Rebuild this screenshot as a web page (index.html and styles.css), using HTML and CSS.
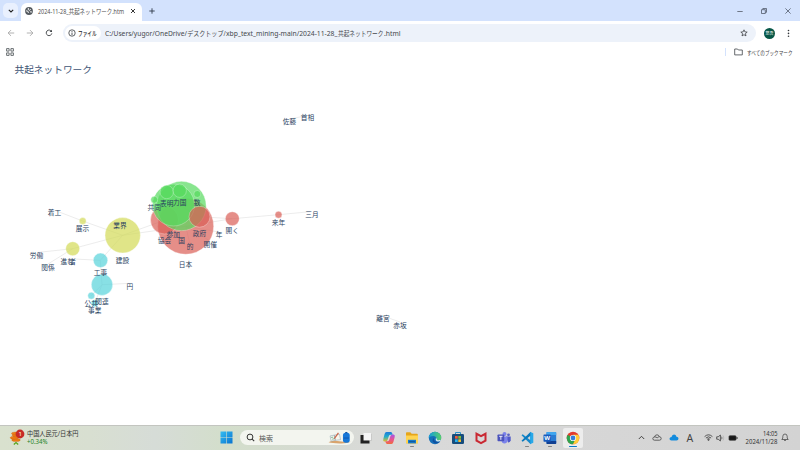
FILE: index.html
```html
<!DOCTYPE html>
<html lang="ja">
<head>
<meta charset="utf-8">
<title>2024-11-28_共起ネットワーク.html</title>
<link rel="stylesheet" href="styles.css">
</head>
<body>
<div class="screen">
  <header class="tabstrip">
    <div class="tab-search"><svg width="6" height="4" viewBox="0 0 6 4"><path d="M.8.8 3 3 5.2.8" fill="none" stroke="#222" stroke-width="1.1"/></svg></div>
    <div class="tab">
      <svg class="globe" width="8" height="8" viewBox="0 0 8 8"><circle cx="4" cy="4" r="3.9" fill="#565b60"/><path d="M1 3.800 3 4.300 3.400 6M3.500 1 3.100 2.400 4.600 3.300 5.800 2.300M5 4.800 7 5" fill="none" stroke="#fff" stroke-width=".9"/></svg>
      <span class="tab-title"><svg width="90" height="12"><text x="0" y="8.7" textLength="86" lengthAdjust="spacingAndGlyphs">2024-11-28_共起ネットワーク.htm</text></svg></span>
      <svg width="6" height="6" viewBox="0 0 6 6"><path d="m1 1 4 4m0-4L1 5" stroke="#222" stroke-width=".9"/></svg>
    </div>
    <svg class="new-tab" width="6" height="6" viewBox="0 0 6 6"><path d="M3 .3v5.4M.3 3h5.4" stroke="#303a4a" stroke-width=".9"/></svg>
    <div class="window-controls">
      <svg width="6" height="6" viewBox="0 0 6 6"><path d="M.3 3.500h5.4" stroke="#555c68" stroke-width=".8"/></svg>
      <svg width="6" height="6" viewBox="0 0 6 6"><path d="M.5 1.700h3.800v3.800H.5zM1.800 1.500V.5h3.700v3.800H4.400" fill="none" stroke="#414958" stroke-width=".7"/></svg>
      <svg width="6" height="6" viewBox="0 0 6 6"><path d="m.4.4 5.200 5.200m0-5.200L.4 5.600" stroke="#414958" stroke-width=".7"/></svg>
    </div>
  </header>
  <div class="toolbar">
    <div class="nav">
      <svg width="8" height="8" viewBox="0 0 8 8"><path d="M7.200 4H1.200M4 1.100 1.100 4 4 6.900" fill="none" stroke="#a0a0a0" stroke-width=".8"/></svg>
      <svg width="8" height="8" viewBox="0 0 8 8"><path d="M.8 4h6M4 1.100 6.900 4 4 6.900" fill="none" stroke="#a0a0a0" stroke-width=".8"/></svg>
      <svg width="8" height="8" viewBox="0 0 8 8"><path d="M6.500 2.500A2.800 2.800 0 1 0 6.800 4.400" fill="none" stroke="#3c4043" stroke-width=".9"/><path d="M4.500 3.100H7V.8z" fill="#3c4043"/></svg>
    </div>
    <div class="omnibox">
      <div class="chip">
        <svg width="8" height="8" viewBox="0 0 8 8"><circle cx="4" cy="4" r="3.200" fill="none" stroke="#2e3134" stroke-width=".75"/><path d="M4 3.500V6M4 2v.9" stroke="#2e3134" stroke-width=".8"/></svg>
        <svg width="20" height="12"><text x="0" y="8.600" textLength="18.500" lengthAdjust="spacingAndGlyphs" class="chip-text">ファイル</text></svg>
      </div>
      <svg class="url" width="300" height="16"><text x="0" y="10.700" textLength="82" lengthAdjust="spacingAndGlyphs">C:/Users/yugor/OneDrive/</text><text x="82.200" y="10.700" textLength="38.500" lengthAdjust="spacingAndGlyphs">デスクトップ/</text><text x="121" y="10.700" textLength="111.500" lengthAdjust="spacingAndGlyphs">xbp_text_mining-main/2024-11-28_</text><text x="233" y="10.700" textLength="45.500" lengthAdjust="spacingAndGlyphs">共起ネットワーク</text><text x="279" y="10.700" textLength="16.500" lengthAdjust="spacingAndGlyphs">.html</text></svg>
      <svg class="star" width="8" height="8" viewBox="0 0 8 8"><path d="m4 .8.900 2.100 2.300.2-1.800 1.500.6 2.300-2-1.200-2 1.200.6-2.300L.8 3.100l2.300-.2z" fill="none" stroke="#35383c" stroke-width=".75"/></svg>
    </div>
    <div class="avatar">悠吾</div>
    <svg class="menu" width="3" height="9" viewBox="0 0 3 9"><circle cx="1.500" cy="1.500" r=".8"/><circle cx="1.500" cy="4.400" r=".8"/><circle cx="1.500" cy="7.300" r=".8"/></svg>
  </div>
  <div class="bookmarks">
    <svg width="8" height="8" viewBox="0 0 8 8"><path d="M.6.6h2.500v2.500H.6zM4.900.6h2.500v2.500H4.900zM.6 4.900h2.500v2.500H.6zM4.900 4.900h2.500v2.500H4.900z" fill="none" stroke="#52575c" stroke-width=".85"/></svg>
    <span class="divider"></span>
    <svg width="9" height="8" viewBox="0 0 9 8"><path d="M.7 1h2.800l.9 1h3.900v4.900H.7z" fill="none" stroke="#4a4f54" stroke-width=".85"/></svg>
    <svg class="all-marks" width="46" height="12"><text x="0" y="8.600" textLength="45.500" lengthAdjust="spacingAndGlyphs">すべてのブックマーク</text></svg>
  </div>
  <main>
    <svg class="network" width="800" height="366" viewBox="0 59 800 366">
      <text class="heading" x="14.500" y="73.400" textLength="77.500" lengthAdjust="spacingAndGlyphs">共起ネットワーク</text>
      <g class="edges">
        <path d="M289 119 308 115.500M383 316l17 6M312 211.500 278.500 214.700 232.300 218.700 199.300 216.700M232.300 218.700 185.700 226.300M54 210 82.700 221 122.700 235.300 72.700 248.700 37 252.500M72.700 248.700 48 264M68 258.700 100.300 260.300 122.700 235.300 165 220M122.700 235.300 185.700 226.300M100.300 260.300 102 284.700 130 283.300M102 284.700 91.300 295.700M102 284.700 94.700 303.300M185.700 226.300 219 232M185.700 226.300 190 244M185.700 226.300 210 241M165 220 173 232M165 220 165 238M181 206 199.300 216.700M181 206 154.300 199.700"/>
      </g>
      <g class="nodes">
        <g fill="#db5f57"><circle cx="185.700" cy="226.300" r="28"/><circle cx="164.500" cy="220" r="14"/><circle cx="232.300" cy="218.700" r="7"/><circle cx="278.500" cy="214.700" r="3.500"/></g>
        <g fill="#57db5f"><circle cx="181.500" cy="206" r="24.700"/><circle cx="173.500" cy="205" r="21"/><circle cx="166.700" cy="192" r="6.700"/><circle cx="179.700" cy="190.700" r="6.700"/><circle cx="197.300" cy="194" r="3.500"/><circle cx="154.300" cy="199.700" r="3.500"/></g>
        <circle cx="199.500" cy="216.700" r="10.500" fill="#db5f57"/>
        <g fill="#d3db57"><circle cx="122.700" cy="235.300" r="17.700"/><circle cx="72.700" cy="248.700" r="7"/><circle cx="82.700" cy="221" r="3.500"/></g>
        <g fill="#57d3db"><circle cx="100.500" cy="260.300" r="7.200"/><circle cx="102" cy="284.700" r="10.700"/><circle cx="91.300" cy="295.700" r="3.500"/><circle cx="94.700" cy="303.300" r="3.500"/></g>
      </g>
      <g class="labels">
        <text x="289.500" y="124">佐藤</text><text x="307.500" y="120.200">首相</text><text x="312" y="216.500">三月</text><text x="278.500" y="224.700">来年</text><text x="232.200" y="233.300">開く</text><text x="219" y="237">年</text><text x="210.300" y="246.500">開催</text><text x="199.500" y="235.700">政府</text><text x="190" y="249">的</text><text x="181.500" y="243">国</text><text x="173.300" y="237.300">参加</text><text x="164.500" y="243.300">協会</text><text x="185.500" y="267">日本</text><text x="154.300" y="210">共同</text><text x="166.700" y="206">表明</text><text x="179.700" y="205.200">力国</text><text x="197" y="204.700">数</text>
        <text x="54.500" y="214.500">着工</text><text x="82.500" y="231">展示</text><text x="120" y="228.300">業界</text><text x="122.500" y="263">建設</text><text x="36.500" y="258.300">労働</text><text x="48" y="269.500">関係</text><text x="67.300" y="263.500">進む</text><text x="72.500" y="263.500">者</text><text x="100.500" y="275">工事</text><text x="129.800" y="288.500">円</text><text x="91.300" y="306">公共</text><text x="102" y="303.700">関連</text><text x="94.700" y="313">事業</text><text x="383" y="321">離宮</text><text x="400" y="328">赤坂</text>
      </g>
    </svg>
  </main>
  <footer class="taskbar">
    <div class="widget">
      <svg width="18" height="20" viewBox="0 0 18 20"><g fill="#ed7b16" stroke="#b85808" stroke-width=".3"><ellipse cx="7" cy="12" rx="4.300" ry="1.500"/><ellipse cx="5.500" cy="9.700" rx="4.300" ry="1.500"/><ellipse cx="7.500" cy="7.500" rx="4.300" ry="1.500"/><ellipse cx="6.500" cy="5.500" rx="4" ry="1.500"/></g><path d="m4.800 16.500 2.200-2 2.200 2" fill="none" stroke="#55a51c" stroke-width="1.200"/><circle cx="11" cy="6" r="4.400" fill="#c72b26"/><text x="9.400" y="8.200" font-size="6" fill="#fff">1</text></svg>
      <div class="widget-text"><svg width="56" height="9"><text x="0" y="6.800" textLength="51.500" lengthAdjust="spacingAndGlyphs">中国人民元/日本円</text></svg><svg width="56" height="8"><text class="rise" x="0" y="6.300" textLength="20.500" lengthAdjust="spacingAndGlyphs">+0.34%</text></svg></div>
    </div>
    <svg class="start" width="13" height="13" viewBox="0 0 13 13"><defs><linearGradient id="win" x1="0" y1="0" x2="1" y2="1"><stop stop-color="#35bdf2"/><stop offset="1" stop-color="#0873d0"/></linearGradient></defs><path d="M.5.500h5.700v5.700H.500zM6.800.500h5.700v5.700H6.800zM.500 6.800h5.700v5.700H.500zM6.800 6.800h5.700v5.700H6.800z" fill="url(#win)"/></svg>
    <div class="search">
      <svg width="9" height="9" viewBox="0 0 9 9"><circle cx="4" cy="4" r="2.900" fill="none" stroke="#333" stroke-width="1"/><path d="m6.200 6.200 2 2" stroke="#333" stroke-width="1.100"/></svg>
      <span>検索</span>
      <svg class="search-art" width="23" height="13" viewBox="0 0 22 12"><path d="M.500 10.500Q4 8.300 11 9.500T22 10Q18 12 11 11.700T.500 10.500" fill="#d9a46d"/><path d="m2 4.500 4-.8 1 5-4 .8zM6 3.700l5-.8 1 5.200-5 .6z" fill="#f8f7ed" stroke="#8a9eac" stroke-width=".5"/><path d="m6 7 4-5.500" stroke="#cb6749" stroke-width="1.200"/><path d="m3 6 2-.4m-1 2 2-.4" stroke="#52a57f" stroke-width=".7"/><rect x="14.300" y="1.500" width="6.500" height="9.500" rx="2.500" fill="#1677d8"/><path d="M16.500 1.300h2" fill="none" stroke="#1355a0" stroke-width="1.200"/><path d="M15 6.500h5" stroke="#1053a6" stroke-width=".8"/></svg>
    </div>
    <div class="apps">
      <div class="app"><svg viewBox="0 0 14 14"><path d="M4.500 2h8v7.500h-8z" fill="#f5f5f5"/><path d="M1.500 4h3v5.500h6v3h-9z" fill="#222"/><path d="M10.500 9.500h2V2.500" fill="none" stroke="#aaa" stroke-width=".5"/></svg></div>
      <div class="app"><svg viewBox="0 0 14 14"><defs><linearGradient id="cpa" x1="0" y1="0" x2="0" y2="1"><stop stop-color="#1c78dc"/><stop offset=".5" stop-color="#23adc9"/><stop offset="1" stop-color="#e5bc27"/></linearGradient><linearGradient id="cpb" x1="0" y1="0" x2="0" y2="1"><stop stop-color="#a456e7"/><stop offset=".5" stop-color="#e65296"/><stop offset="1" stop-color="#f26c3c"/></linearGradient></defs><path d="M4.500 1h4.400q1 0 1.500 1.800l.3 1H8.500Q7 3.800 6.500 6L5.600 9q-.6 1.500-2 1.500H2.400Q.7 10.500 1.300 8l1.300-5Q3.100 1 4.500 1" fill="url(#cpa)"/><path d="M9.500 13H5.100q-1 0-1.500-1.800l-.3-1h2.200Q7 10.200 7.500 8l.9-3q.6-1.500 2-1.500h1.200q1.700 0 1.100 2.500l-1.300 5q-.5 2-1.900 2" fill="url(#cpb)"/></svg></div>
      <div class="app running"><svg viewBox="0 0 14 14"><path d="M1 2q0-.800.8-.800h3.500l1.400 1.500H12q.8 0 .8.800v8.700H1z" fill="#e6a51b"/><path d="M1 4.500h12v7q0 .9-.9.900H2q-1 0-1-.9z" fill="#ffd451"/><path d="M3 8.800h8v3.600H3z" fill="#1979c9"/><path d="M4 10.600h6" stroke="#0d599e"/></svg></div>
      <div class="app"><svg viewBox="0 0 14 14"><defs><linearGradient id="edg" x1="0" y1="0" x2="1" y2="0"><stop stop-color="#159ddb"/><stop offset="1" stop-color="#59cf67"/></linearGradient></defs><circle cx="7" cy="7" r="6.200" fill="#156fb9"/><path d="M.8 7A6.200 6.200 0 0 1 13.200 7q0 2.800-3.200 2.700-2 0-1.500-1.700Q8.300 5 5.200 5 2 5 .8 7" fill="url(#edg)"/><path d="M7 5.500q-2 1.300-1 3.500 1.500 2.700 5.800 1.800Q9 13 6.300 12 2.500 9.500 7 5.500" fill="#104f9e"/><path d="M8.500 7.500q-.6 2.100 1.300 2.300 1.500.2 2.700-.500" stroke="#d9e6ed" stroke-width="1.300" fill="none"/></svg></div>
      <div class="app"><svg viewBox="0 0 14 14"><path d="M4.500 4V1.500h5V4" fill="none" stroke="#2c92c8" stroke-width="1"/><rect x="1" y="3" width="12" height="10" rx="1.200" fill="#174d7d"/><path d="M4 5h2.700v2.700H4z" fill="#f05a3c"/><path d="M7.300 5H10v2.700H7.300z" fill="#86bd34"/><path d="M4 8.300h2.700V11H4z" fill="#27b0ec"/><path d="M7.300 8.300H10V11H7.300z" fill="#f6bd2e"/></svg></div>
      <div class="app"><svg viewBox="0 0 14 14"><path d="m1.500 1 5.500 3 5.500-3v9.300L7 13.300l-5.500-3zM3.500 4.400V9L7 10.900 10.500 9V4.400L7 6.300z" fill="#c92832" fill-rule="evenodd"/></svg></div>
      <div class="app"><svg viewBox="0 0 14 14"><circle cx="7.500" cy="3" r="2" fill="#7b83eb"/><circle cx="11.500" cy="3.800" r="1.400" fill="#5b62c4"/><path d="M9 5.500h4.700v4q-.5 2-2.700 2z" fill="#5059c9"/><path d="M4.500 5.500h6v4q-.5 3-3 3-2.700 0-3-3z" fill="#7b83eb"/><rect x=".5" y="3.500" width="6.700" height="6.700" rx=".7" fill="#4b53bc"/><path d="M2.200 5.300h3.300M3.850 5.300v3.500" stroke="#fff" stroke-width=".9"/></svg></div>
      <div class="app running"><svg viewBox="0 0 14 14"><path d="M10 .8 13.300 2.300v9.400L10 13.200V.8z" fill="#29a8e8"/><path d="m1.500 4.200 1.200-1 7.700 6v3.900z" fill="#1688ca"/><path d="m1.500 9.800 1.200 1 7.700-6V.9z" fill="#0878bd"/></svg></div>
      <div class="app running"><svg viewBox="0 0 14 14"><rect x="3.500" y="1" width="9.700" height="12" rx=".8" fill="#2b7cd3"/><path d="M3.500 1.800q0-.8.800-.8h8q.9 0 .9.800V4H3.500z" fill="#41a5ee"/><path d="M3.500 10h9.700v2.200q0 .8-.9.800h-8q-.8 0-.8-.8z" fill="#103f91"/><rect x=".5" y="3.500" width="7.200" height="7.200" rx=".6" fill="#185abd"/><text x="1.200" y="9.200" font-size="6" font-weight="bold" fill="#fff">W</text></svg></div>
      <div class="app running active"><svg viewBox="0 0 14 14"><circle cx="7" cy="7" r="6.300" fill="#e33b2e"/><path d="M7 7 1.540 3.850A6.300 6.300 0 0 0 7 13.300l3-5z" fill="#2da44f"/><path d="M7 7h3l-3 6.300A6.300 6.300 0 0 0 12.460 3.850H7z" fill="#ffcd38"/><circle cx="7" cy="7" r="3.100" fill="#fff"/><circle cx="7" cy="7" r="2.400" fill="#367edb"/></svg></div>
    </div>
    <div class="tray">
      <svg width="7" height="5" viewBox="0 0 7 5"><path d="m.8 4 2.700-2.700L6.200 4" fill="none" stroke="#333" stroke-width=".9"/></svg>
      <svg class="cloud-a" width="10" height="7" viewBox="0 0 10 7"><path d="M2.500 6.200Q.6 6 .8 4.500 1 3 2.500 3 3 .8 5 .8q1.700 0 2.300 1.900 1.900.1 1.900 1.800T7.500 6.200zM2.500 3q1.500-.3 2.700.8 1-.9 2.100-1.100" fill="none" stroke="#444" stroke-width=".8"/></svg>
      <svg class="cloud-b" width="10" height="7" viewBox="0 0 10 7"><path d="M2.500 6.500Q.3 6.300.5 4.500.7 3 2.500 3 3 .5 5 .5q1.900 0 2.500 2.200 2 .1 2 1.900T7.500 6.500z" fill="#138bdd"/></svg>
      <span class="ime">A</span>
      <svg class="wifi" width="9" height="7" viewBox="0 0 9 7"><path d="M.6 2.600Q4.500-1 8.400 2.600M1.900 4q2.600-2.400 5.200 0M3.200 5.200q1.300-1.100 2.600 0" fill="none" stroke="#333" stroke-width=".8"/><circle cx="4.500" cy="6" r=".8" fill="#333"/></svg>
      <svg class="sound" width="9" height="8" viewBox="0 0 9 8"><path d="M.7 2.800h1.500L4.400 1v6L2.200 5.200H.7z" fill="none" stroke="#333" stroke-width=".75"/><path d="M5.500 2.700q1 1.300 0 2.600" fill="none" stroke="#444" stroke-width=".7"/><path d="M7 1.500q1.700 2.500 0 5" fill="none" stroke="#aaa" stroke-width=".6"/></svg>
      <svg class="battery" width="10" height="6" viewBox="0 0 10 6"><rect x="1" y=".8" width="7" height="4.400" rx=".8" fill="#181818" stroke="#333" stroke-width=".7"/><path d="M9 2v2" stroke="#333"/></svg>
      <div class="clock"><svg width="33" height="8"><text x="18" y="6.400" textLength="14.500" lengthAdjust="spacingAndGlyphs">14:05</text></svg><svg width="33" height="8"><text x=".5" y="6.300" textLength="32" lengthAdjust="spacingAndGlyphs">2024/11/28</text></svg></div>
      <svg class="bell" width="8" height="9" viewBox="0 0 8 9"><path d="M.8 6.500 1.800 5V3.300Q2 1 4 1t2.200 2.300V5l1 1.500zM3 7q1 1.500 2 0" fill="none" stroke="#444" stroke-width=".75"/></svg>
    </div>
  </footer>
</div>
</body>
</html>
```
FILE: styles.css
```css
* { box-sizing: border-box; }
body { margin: 0; overflow: hidden; background: #fff; font-family: "Noto Sans", "Noto Sans CJK JP", sans-serif; font-size: 6.5px; color: #333; }
svg { display: block; flex: none; overflow: visible; }
.screen { width: 800px; height: 450px; display: flex; flex-direction: column; }
.tabstrip { height: 21px; display: flex; align-items: center; background: #d3e2fd; padding-left: 3px; }
.tab-search { width: 15px; height: 15px; border-radius: 5px; background: #e9f0fe; display: grid; place-items: center; }
.tab { align-self: flex-end; width: 121px; height: 18px; margin-left: 3px; padding: 0 6px 3px 4px; border-radius: 6px 6px 0 0; background: #fff; display: flex; align-items: center; }
.tab-title { margin-left: 4.500px; flex: 1; font-size: 6.5px; }
.tab-title text { fill: #505050; }
.new-tab { margin-left: 7px; }
.window-controls { margin-left: auto; margin-right: 9px; display: flex; gap: 18px; }
.toolbar { height: 24px; display: flex; align-items: center; padding-left: 7px; background: #fff; }
.nav { display: flex; gap: 11px; }
.omnibox { width: 693px; height: 18px; margin-left: 10px; padding-left: 2px; border-radius: 9px; display: flex; align-items: center; background: #edf2fa; }
.chip { width: 36px; height: 14px; padding-left: 2.500px; border-radius: 7px; background: #fff; display: flex; align-items: center; gap: 2px; }
.chip-text { font-size: 6.500px; font-weight: 500; fill: #202020; }
.url { margin-left: 3.500px; font-size: 7.300px; }
.url text { fill: #45484d; }
.star { margin-left: auto; margin-right: 8.500px; }
.avatar { width: 11px; height: 11px; margin-left: 8px; border-radius: 50%; background: #075747; color: #fff; display: grid; place-items: center; font-size: 4px; white-space: nowrap; }
.menu { margin-left: 12px; fill: #34383c; }
.bookmarks { height: 14px; padding-left: 6px; display: flex; align-items: center; }
.divider { width: 1.500px; height: 8px; margin-left: auto; margin-right: 8px; background: #d3e2fd; }
.all-marks { margin-left: 4px; margin-right: 7px; font-size: 6px; fill: #444; }
main { height: 366px; background: #fff; }
.heading { font-size: 9.500px; fill: #3d5374; }
.edges { fill: none; stroke: #d9d9d9; stroke-width: .5; }
.nodes circle { opacity: .7; stroke: #fff; stroke-width: .4; }
.labels { font-size: 6.700px; text-anchor: middle; fill: #2a3f5f; }
.taskbar { height: 25px; padding-bottom: 1px; display: flex; align-items: center; border-top: 1px solid #c3c5c0; background: linear-gradient(90deg, #d9e1ce 0, #d8dfd1 90px, #d6dcd7 155px, #d3decb 225px, #d5dbd1 300px, #d9dad8 370px, #d9d9d9 430px, #d3d3d3 800px); }
.widget { width: 220px; padding-left: 9px; display: flex; align-items: center; }
.widget-text { font-size: 6.500px; fill: #333; }
.rise { fill: #228126; }
.search { width: 114px; height: 15px; margin-left: 7px; padding: 0 3px 0 6px; display: flex; align-items: center; border-radius: 8px; background: #f3f5ef; color: #555; font-size: 7px; }
.search span { margin-left: 4px; }
.search-art { margin-left: auto; }
.apps { margin-left: 2px; display: flex; gap: 3px; }
.app { width: 20px; height: 20px; display: grid; justify-items: center; align-content: start; grid-template-rows: 17px 2px; border-radius: 2px; }
.app svg { width: 14px; height: 14px; margin-top: 3px; }
.running::after { content: ""; width: 4px; height: 1.300px; margin-top: 1px; border-radius: 1px; background: #858585; }
.active { background: #ededed; }
.active::after { width: 8px; background: #0778c8; }
.tray { margin-left: auto; padding-right: 11px; display: flex; align-items: center; }
.cloud-a { margin-left: 7.500px; }
.cloud-b { margin-left: 7px; }
.ime { width: 8px; margin-left: 7.500px; font-size: 10.500px; line-height: 14px; color: #444; }
.wifi { margin-left: 9px; }
.sound { margin-left: 3px; }
.battery { margin-left: 3.500px; }
.clock { margin-left: 7px; font-size: 6.500px; fill: #333; }
.bell { margin-left: 3px; }
```
